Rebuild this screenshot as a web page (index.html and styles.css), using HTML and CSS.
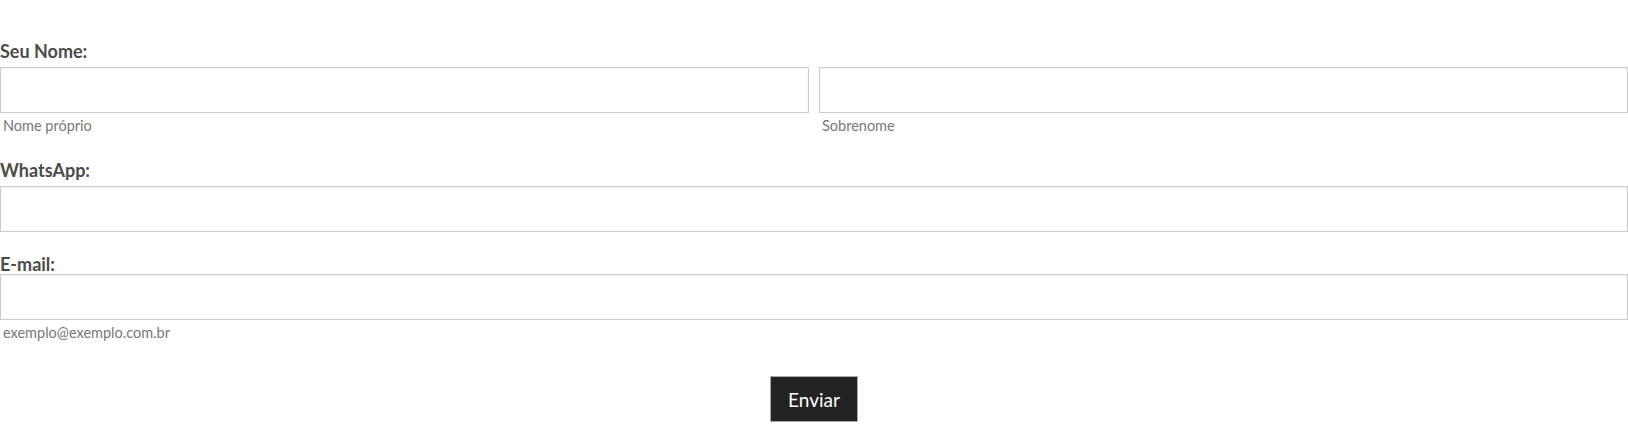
FILE: index.html
```html
<!DOCTYPE html>
<html lang="pt-BR">
<head>
  <meta charset="UTF-8" />
  <meta name="viewport" content="width=device-width, initial-scale=1.0" />
  <title>Contato</title>
  <link rel="stylesheet" href="styles.css">
</head>
<body>
  <form class="contact-form" id="contactForm">
    <div class="field field-name">
      <label class="field-label">Seu Nome:</label>
      <div class="row">
        <div class="col">
          <input type="text" id="firstName" />
          <span class="hint">Nome próprio</span>
        </div>
        <div class="col">
          <input type="text" id="lastName" />
          <span class="hint">Sobrenome</span>
        </div>
      </div>
    </div>

    <div class="field field-phone">
      <label class="field-label">WhatsApp:</label>
      <input type="tel" id="whatsapp" />
    </div>

    <div class="field field-tight">
      <label class="field-label">E-mail:</label>
      <input type="email" id="email" />
      <span class="hint">exemplo@exemplo.com.br</span>
    </div>

    <div class="actions">
      <button type="button" id="sendBtn">Enviar</button>
    </div>
  </form>
</body>
</html>
```

FILE: styles.css
```css
* {
  box-sizing: border-box;
}

body {
  margin: 0;
  font-family: Lato, 'Open Sans', sans-serif;
  color: #4b4b4b;
  background: #fff;
}

.contact-form {
  padding-top: 39px;
}

.field {
  display: flex;
  flex-direction: column;
  margin-bottom: 18px;
}

.field-name {
  margin-bottom: 22px;
}

.field-phone {
  margin-bottom: 21px;
}

.field-label {
  display: block;
  font-size: 18px;
  font-weight: 700;
  line-height: 24px;
  color: #4b4b4b;
  margin-bottom: 4px;
}

.field-tight .field-label {
  line-height: 22px;
  margin-bottom: -1px;
}

.row {
  display: flex;
  gap: 10px;
}

.col {
  flex: 1;
  display: flex;
  flex-direction: column;
}

input {
  width: 100%;
  height: 46px;
  padding: 8px 10px;
  border: 1px solid #ccc;
  box-shadow: inset 0 1px 2px rgba(0, 0, 0, 0.06);
  border-radius: 0;
  font-family: inherit;
  font-size: 16px;
  background: #fff;
}

.hint {
  display: block;
  padding-left: 3px;
  margin-top: 3px;
  font-size: 14.5px;
  line-height: 20px;
  color: #777;
}

.actions {
  display: flex;
  justify-content: center;
  padding-top: 15px;
}

#sendBtn {
  background-color: #222;
  color: #fff;
  border: 1px solid #aaa;
  width: 88px;
  height: 46px;
  font-family: inherit;
  font-size: 19px;
  cursor: pointer;
}
```
